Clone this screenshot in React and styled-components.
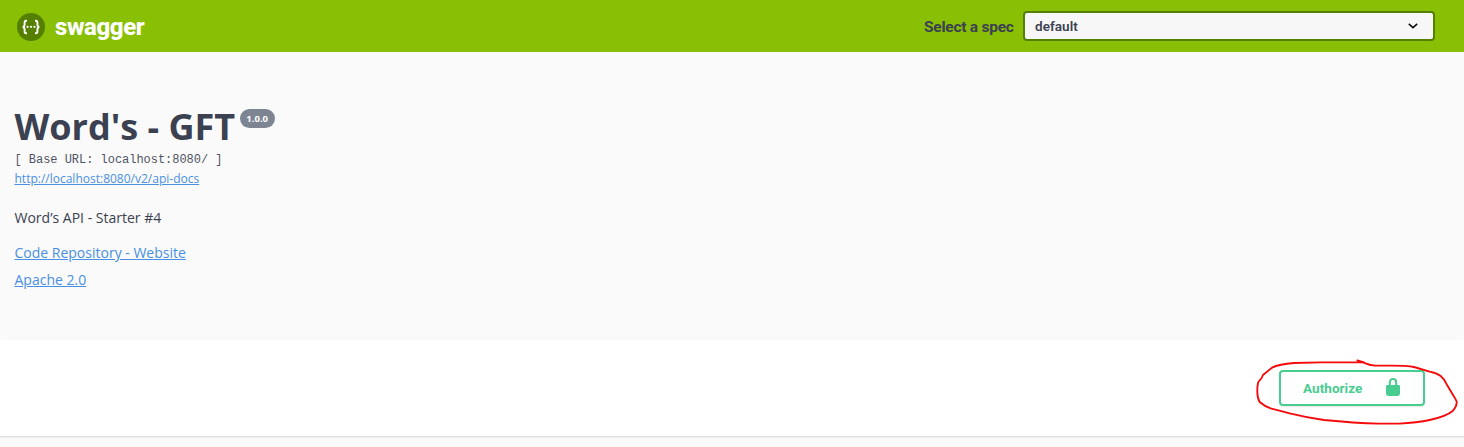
import React from 'react';
import styled, { createGlobalStyle } from 'styled-components';

const GlobalStyle = createGlobalStyle`
  *, *::before, *::after { box-sizing: border-box; }
  body {
    margin: 0;
    background: #fafafa;
    color: #3b4151;
    font-family: "Open Sans", "Noto Sans", sans-serif;
    overflow: hidden;
  }
`;

const Page = styled.div`
  min-height: 447px;
`;

const Topbar = styled.header`
  height: 52px;
  padding: 0 29px 0 17px;
  display: flex;
  align-items: center;
  justify-content: space-between;
  background: #89bf04;
`;

const Brand = styled.a`
  display: flex;
  align-items: center;
  gap: 10px;
  padding-top: 1px;
  color: #fff;
`;

const BrandName = styled.span`
  font: 800 24px/30px Roboto, sans-serif;
  letter-spacing: -0.4px;
`;

const SpecPicker = styled.label`
  display: flex;
  align-items: center;
`;

const SpecLabel = styled.span`
  width: 99px;
  padding-top: 1px;
  white-space: nowrap;
  font: 700 15.5px/24px Roboto, sans-serif;
  letter-spacing: -0.25px;
`;

const SpecSelect = styled.div`
  width: 412px;
  height: 30px;
  padding: 0 15px 0 10px;
  display: flex;
  align-items: center;
  justify-content: space-between;
  border: 2px solid #547f00;
  border-radius: 4px;
  background: #f7f7f7;
  font: 600 13.5px/20px Roboto, sans-serif;
  letter-spacing: 0.05px;
`;

const Info = styled.section`
  height: 288px;
  padding: 50px 14.5px 0;
`;

const TitleRow = styled.div`
  display: flex;
  align-items: flex-start;
  gap: 4.5px;
`;

const Title = styled.h2`
  margin: 0;
  font-size: 36px;
  font-weight: 700;
  line-height: 49px;
`;

const Version = styled.span`
  width: 35px;
  height: 19px;
  margin-top: 7px;
  border-radius: 10px;
  background: #7d8492;
  color: #fff;
  font-size: 9.5px;
  font-weight: 700;
  line-height: 19px;
  text-align: center;
`;

const BaseUrl = styled.pre`
  margin: 0;
  color: #505563;
  font: 300 12px/18px "Liberation Mono", monospace;
  letter-spacing: -0.03px;
`;

const Link = styled.a`
  display: block;
  width: max-content;
  color: #4990e2;
  text-decoration: underline;
  font-size: ${({ $small }) => ($small ? 12 : 14)}px;
  line-height: ${({ $small }) => ($small ? 20 : 27)}px;
`;

const Description = styled.p`
  margin: 18px 0 11px;
  font-size: 14px;
  line-height: 21px;
`;

const AuthBar = styled.section`
  position: relative;
  height: 96px;
  padding: 30px 39px 0 0;
  display: flex;
  justify-content: flex-end;
  align-items: flex-start;
  background: #fff;
  box-shadow: 0 1px 2px rgba(0, 0, 0, 0.15);
`;

const AuthorizeButton = styled.button`
  width: 146px;
  height: 36px;
  padding: 0 23px 0 22px;
  display: flex;
  align-items: center;
  justify-content: space-between;
  border: 2px solid #49cc90;
  border-radius: 4px;
  background: transparent;
  box-shadow: 0 1px 2px rgba(0, 0, 0, 0.1);
  color: #49cc90;
  font: 700 13.5px/20px Roboto, sans-serif;
  letter-spacing: 0.05px;
`;

const LockIcon = styled.svg`
  margin-top: -3px;
`;

const Marker = styled.svg`
  position: absolute;
  top: 10px;
  right: 0;
  pointer-events: none;
`;

const SwaggerMark = () => (
  <svg width="28" height="28" viewBox="0 0 28 28" fill="none">
    <circle cx="14" cy="14" r="14" fill="#547f00" />
    <path
      d="M10 7.7H9.2Q7.6 7.7 7.6 9.4V11.6Q7.6 13.7 5.7 14Q7.6 14.3 7.6 16.4V18.6Q7.6 20.3 9.2 20.3H10M18 7.7H18.8Q20.4 7.7 20.4 9.4V11.6Q20.4 13.7 22.3 14Q20.4 14.3 20.4 16.4V18.6Q20.4 20.3 18.8 20.3H18"
      stroke="#fff"
      strokeWidth="1.9"
    />
    <circle cx="10.6" cy="13.8" r="1.1" fill="#fff" />
    <circle cx="14" cy="13.8" r="1.1" fill="#fff" />
    <circle cx="17.4" cy="13.8" r="1.1" fill="#fff" />
  </svg>
);

const Chevron = () => (
  <svg width="10" height="6" viewBox="0 0 10 6" fill="none">
    <path d="M0.8 0.8L5 4.7L9.2 0.8" stroke="#111" strokeWidth="1.6" />
  </svg>
);

const Lock = () => (
  <LockIcon width="14" height="18" viewBox="0 0 14 18" fill="none">
    <path d="M3.8 8V4.4C3.8 2.2 5.1 1 7 1S10.2 2.2 10.2 4.4V8" stroke="#49cc90" strokeWidth="2" />
    <path d="M1.2 7H12.8Q14 7 14 8.2V15.6Q14 18 11.6 18H2.4Q0 18 0 15.6V8.2Q0 7 1.2 7Z" fill="#49cc90" />
  </LockIcon>
);

export default function App() {
  return (
    <Page>
      <GlobalStyle />
      <Topbar>
        <Brand>
          <SwaggerMark />
          <BrandName>swagger</BrandName>
        </Brand>
        <SpecPicker>
          <SpecLabel>Select a spec</SpecLabel>
          <SpecSelect>
            default
            <Chevron />
          </SpecSelect>
        </SpecPicker>
      </Topbar>
      <Info>
        <TitleRow>
          <Title>Word's - GFT</Title>
          <Version>1.0.0</Version>
        </TitleRow>
        <BaseUrl>[ Base URL: localhost:8080/ ]</BaseUrl>
        <Link $small>http://localhost:8080/v2/api-docs</Link>
        <Description>Word’s API - Starter #4</Description>
        <Link>Code Repository - Website</Link>
        <Link>Apache 2.0</Link>
      </Info>
      <AuthBar>
        <AuthorizeButton>
          Authorize
          <Lock />
        </AuthorizeButton>
        <Marker width="220" height="86" viewBox="0 0 660 258" fill="none">
          <path
            d="M340 31L360 37H230L150 39Q105 42 84 53L57 75L53 84L43 96Q39 110 40 126Q40 145 47 156Q60 168 82 176L115 184L137 190Q190 203 240 210Q330 219 405 221H465Q520 218 557 210Q607 199 626 183Q639 170 638 154L632 143L607 101Q600 86 590 78Q578 69 557 65L510 51Q490 47 440 47H395Q377 46 367 41L342 33"
            stroke="#f40a0a"
            strokeWidth="5.5"
            strokeLinejoin="round"
            strokeLinecap="round"
          />
        </Marker>
      </AuthBar>
    </Page>
  );
}
